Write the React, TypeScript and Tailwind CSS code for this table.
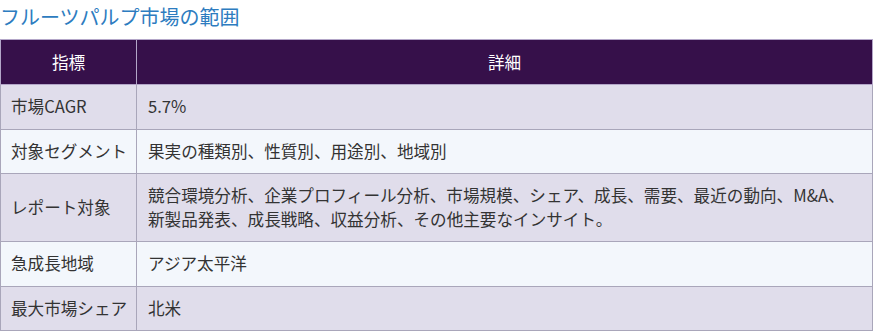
const rows: { label: string; value: React.ReactNode }[] = [
  { label: '市場CAGR', value: '5.7%' },
  { label: '対象セグメント', value: '果実の種類別、性質別、用途別、地域別' },
  {
    label: 'レポート対象',
    value: (
      <>
        競合環境分析、企業プロフィール分析、市場規模、シェア、成長、需要、最近の動向、M&amp;A、
        <br />
        新製品発表、成長戦略、収益分析、その他主要なインサイト。
      </>
    ),
  },
  { label: '急成長地域', value: 'アジア太平洋' },
  { label: '最大市場シェア', value: '北米' },
];

export default function App() {
  return (
    <div
      className="w-[879px] h-[334px] bg-white overflow-hidden"
      style={{ fontFamily: '"Noto Sans CJK JP", "Noto Sans", sans-serif' }}
    >
      {/* Title */}
      <h3 className="text-[20px] leading-[28px] pt-[3px] pb-[8px] text-[#2d7cc0] font-normal">
        フルーツパルプ市場の範囲
      </h3>

      {/* Scope table */}
      <table className="w-[873px] table-fixed border-collapse text-[16.6px] text-[#333333]">
        <thead>
          <tr className="bg-[#36104a] text-white">
            <th className="w-[136px] h-[45px] border border-[#b3a6c8] font-normal text-center leading-[24px]">
              指標
            </th>
            <th className="h-[45px] border border-[#b3a6c8] font-normal text-center leading-[24px]">
              詳細
            </th>
          </tr>
        </thead>
        <tbody>
          {rows.map((row, i) => (
            <tr key={row.label} className={i % 2 === 0 ? 'bg-[#e0ddeb]' : 'bg-[#f3f7fc]'}>
              <td className="border border-[#a9a6ba] pl-[10px] pr-0 py-[10px] leading-[23.5px] align-middle whitespace-nowrap">
                {row.label}
              </td>
              <td className="border border-[#a9a6ba] px-[11px] py-[10px] leading-[23.5px] align-middle">
                {row.value}
              </td>
            </tr>
          ))}
        </tbody>
      </table>
    </div>
  );
}
